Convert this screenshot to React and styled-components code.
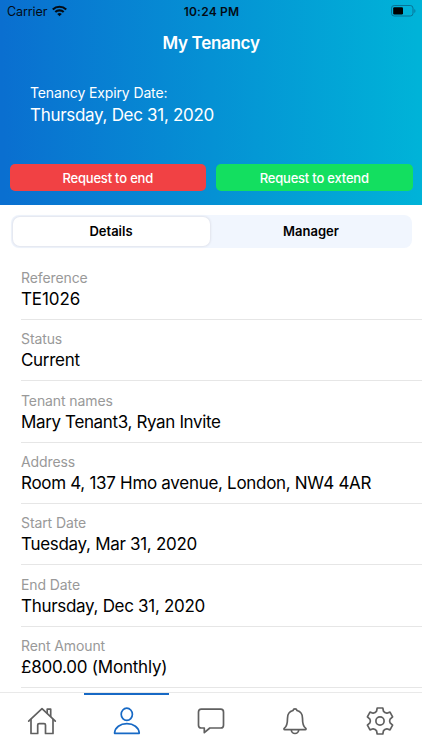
import React, { useState } from 'react';
import styled, { createGlobalStyle } from 'styled-components';

const GlobalStyle = createGlobalStyle`
  * {
    box-sizing: border-box;
  }

  body {
    margin: 0;
    background: white;
    font-family: Inter, 'Liberation Sans', sans-serif;
    overflow: hidden;
  }

  button {
    font-family: inherit;
    border: none;
    padding: 0;
  }

  p,
  h1 {
    margin: 0;
  }
`;

const Screen = styled.div`
  display: flex;
  flex-direction: column;
  width: 100%;
  height: 100vh;
  overflow: hidden;
`;

const Header = styled.header`
  flex: none;
  height: 205px;
  background: linear-gradient(89deg, #0a6fd0 1%, #00b3d8 99%);
  color: white;
`;

const StatusBar = styled.div`
  display: grid;
  grid-template-columns: 1fr auto 1fr;
  align-items: center;
  height: 22px;
  padding: 0 6px 0 7px;
  color: #030b14;
  font-size: 12.5px;
`;

const Carrier = styled.div`
  display: flex;
  align-items: center;
  gap: 5px;
  letter-spacing: -0.1px;
`;

const Clock = styled.p`
  font-size: 12px;
  font-weight: 600;
  letter-spacing: 0.2px;
`;

const BatteryIcon = styled.svg`
  justify-self: end;
`;

const Title = styled.h1`
  height: 42px;
  line-height: 43px;
  text-align: center;
  font-size: 17px;
  font-weight: 600;
  letter-spacing: -0.3px;
`;

const Expiry = styled.div`
  height: 100px;
  padding: 19px 30px 0;
`;

const ExpiryLabel = styled.p`
  font-size: 14px;
  line-height: 20px;
  letter-spacing: -0.13px;
`;

const ExpiryDate = styled.p`
  font-size: 17px;
  line-height: 24px;
  letter-spacing: -0.3px;
`;

const Actions = styled.div`
  display: flex;
  gap: 10px;
  padding: 0 9.5px;
`;

const ActionButton = styled.button`
  flex: 1;
  height: 27px;
  border-radius: 5px;
  background: ${(props) => props.$color};
  color: white;
  font-size: 13px;
  font-weight: 500;
  letter-spacing: -0.2px;
`;

const Segments = styled.div`
  flex: none;
  display: flex;
  gap: 3px;
  height: 33px;
  margin: 10px 10.5px 0;
  padding: 2px 2px 2px 2px;
  border-radius: 8px;
  background: #f1f6fe;
`;

const Segment = styled.button`
  flex: 1;
  padding-bottom: 1px;
  border-radius: 7px;
  background: ${(props) => (props.$active ? 'white' : 'transparent')};
  box-shadow: ${(props) => (props.$active ? '0 0 2px 1px #e1e4ed' : 'none')};
  color: black;
  font-size: 13px;
  font-weight: 600;
`;

const DetailList = styled.div`
  flex: 1;
  min-height: 0;
  overflow: hidden;
  padding: 10.4px 0 0 21px;
`;

const DetailItem = styled.div`
  height: 61.4px;
  padding-top: 9.5px;
  border-bottom: 1px solid #e6e6e6;
`;

const DetailLabel = styled.p`
  color: #999;
  font-size: 14px;
  line-height: 20px;
  letter-spacing: -0.1px;
`;

const DetailValue = styled.p`
  color: black;
  font-size: 17px;
  line-height: 23px;
  letter-spacing: ${(props) => props.$spacing || -0.3}px;
`;

const TabBar = styled.nav`
  flex: none;
  display: flex;
  height: 58px;
  border-top: 1px solid #e9e9e9;
`;

const Tab = styled.button`
  flex: 1;
  display: flex;
  justify-content: center;
  padding-top: 11px;
  background: white;
  border-top: 2px solid ${(props) => (props.$active ? '#1769c5' : 'transparent')};
  color: ${(props) => (props.$active ? '#1769c5' : '#606060')};
`;

const TabIcon = styled.svg`
  flex: none;
  width: 30px;
  height: 30px;
  fill: none;
  stroke: currentColor;
  stroke-width: 1.7;
  stroke-linecap: round;
  stroke-linejoin: round;
`;

const details = [
  { label: 'Reference', value: 'TE1026', spacing: -0.1 },
  { label: 'Status', value: 'Current' },
  { label: 'Tenant names', value: 'Mary Tenant3, Ryan Invite', spacing: -0.36 },
  { label: 'Address', value: 'Room 4, 137 Hmo avenue, London, NW4 4AR' },
  { label: 'Start Date', value: 'Tuesday, Mar 31, 2020' },
  { label: 'End Date', value: 'Thursday, Dec 31, 2020' },
  { label: 'Rent Amount', value: '£800.00 (Monthly)', spacing: -0.22 },
];

const tabs = [
  {
    name: 'home',
    icon: (
      <>
        <path d="M1.7 15.2 15 2.7l13.3 12.5" />
        <path d="M4 13.5v14h6.7V19q0-1.4 1.4-1.4h5q1.4 0 1.4 1.4v8.5H26v-14" />
        <path d="M20.2 7V3.2h3.5v7" />
      </>
    ),
  },
  {
    name: 'tenancy',
    icon: (
      <>
        <ellipse cx="14.8" cy="8.3" rx="5.6" ry="6.1" />
        <path d="M3.1 27.4c-.4 0-.6-.3-.5-.8C3.2 21.5 8 17.7 14.9 17.700s11.700 3.800 12.300 8.900c.1.500-.1.800-.5.800z" />
      </>
    ),
  },
  {
    name: 'messages',
    icon: (
      <path d="M5.3 3.2h19.4q2.8 0 2.8 2.8v13.2q0 2.8-2.8 2.800H13.800l-5.500 4.700V22h-3q-2.800 0-2.800-2.800V6q0-2.800 2.800-2.800z" />
    ),
  },
  {
    name: 'alerts',
    icon: (
      <>
        <path d="M15 2.800c1.200 0 1.800.7 2 1.700 4 1 5.500 4 5.500 7.700 0 5.400.5 8.200 3.100 9.900.7.500.5 1.500-.3 1.500H4.700c-.8 0-1-1-.3-1.500 2.600-1.700 3.100-4.500 3.100-9.900 0-3.700 1.500-6.700 5.500-7.700.2-1 .8-1.700 2-1.700z" />
        <path d="M11.300 23.800a3.700 3.700 0 0 0 7.400 0" />
      </>
    ),
  },
  {
    name: 'settings',
    icon: (
      <>
        <path d="M12.200 2h5.600l.7 3.300Q19.500 7 21.800 7.200l3.200-1.100 2.600 4.700-2.500 2.300q-1 1.900 0 3.800l2.500 2.300-2.600 4.700-3.200-1.100Q19.500 23 18.500 24.700L17.800 28h-5.600l-.7-3.300Q10.500 23 8.200 22.800L5 23.900l-2.600-4.700 2.500-2.300q1-1.900 0-3.800l-2.500-2.300L5 6.100l3.200 1.100Q10.500 7 11.500 5.300z" />
        <circle cx="15" cy="15" r="4.100" />
      </>
    ),
  },
];

function StatusRow() {
  return (
    <StatusBar>
      <Carrier>
        <span>Carrier</span>
        <svg width="15" height="12" viewBox="0 0 15 12">
          <g fill="none" stroke="currentColor" strokeWidth="2.1">
            <path d="M.8 4.5a9.5 9.5 0 0 1 13.4 0" />
            <path d="M3.3 7.1a6 6 0 0 1 8.4 0" />
          </g>
          <path d="M7.5 11.3 5.2 9a3.3 3.3 0 0 1 4.6 0z" fill="currentColor" />
        </svg>
      </Carrier>
      <Clock>10:24 PM</Clock>
      <BatteryIcon width="25" height="12" viewBox="0 0 25 12">
        <rect x=".5" y=".5" width="21.5" height="10.5" rx="2.7" fill="none" stroke="#087396" />
        <rect x="2.2" y="2.2" width="9.8" height="7.2" rx="1.2" fill="black" />
        <path d="M23.4 4v4c1.3-.6 1.3-3.4 0-4z" fill="#087396" />
      </BatteryIcon>
    </StatusBar>
  );
}

function App() {
  const [segment, setSegment] = useState('Details');
  const [activeTab, setActiveTab] = useState('tenancy');

  return (
    <>
      <GlobalStyle />
      <Screen>
        <Header>
          <StatusRow />
          <Title>My Tenancy</Title>
          <Expiry>
            <ExpiryLabel>Tenancy Expiry Date:</ExpiryLabel>
            <ExpiryDate>Thursday, Dec 31, 2020</ExpiryDate>
          </Expiry>
          <Actions>
            <ActionButton $color="#f14144">Request to end</ActionButton>
            <ActionButton $color="#13df60">Request to extend</ActionButton>
          </Actions>
        </Header>
        <Segments>
          {['Details', 'Manager'].map((name) => (
            <Segment key={name} $active={segment === name} onClick={() => setSegment(name)}>
              {name}
            </Segment>
          ))}
        </Segments>
        <DetailList>
          {details.map((item) => (
            <DetailItem key={item.label}>
              <DetailLabel>{item.label}</DetailLabel>
              <DetailValue $spacing={item.spacing}>{item.value}</DetailValue>
            </DetailItem>
          ))}
        </DetailList>
        <TabBar>
          {tabs.map((tab) => (
            <Tab
              key={tab.name}
              $active={activeTab === tab.name}
              onClick={() => setActiveTab(tab.name)}
            >
              <TabIcon viewBox="0 0 30 30">{tab.icon}</TabIcon>
            </Tab>
          ))}
        </TabBar>
      </Screen>
    </>
  );
}

export default App;
